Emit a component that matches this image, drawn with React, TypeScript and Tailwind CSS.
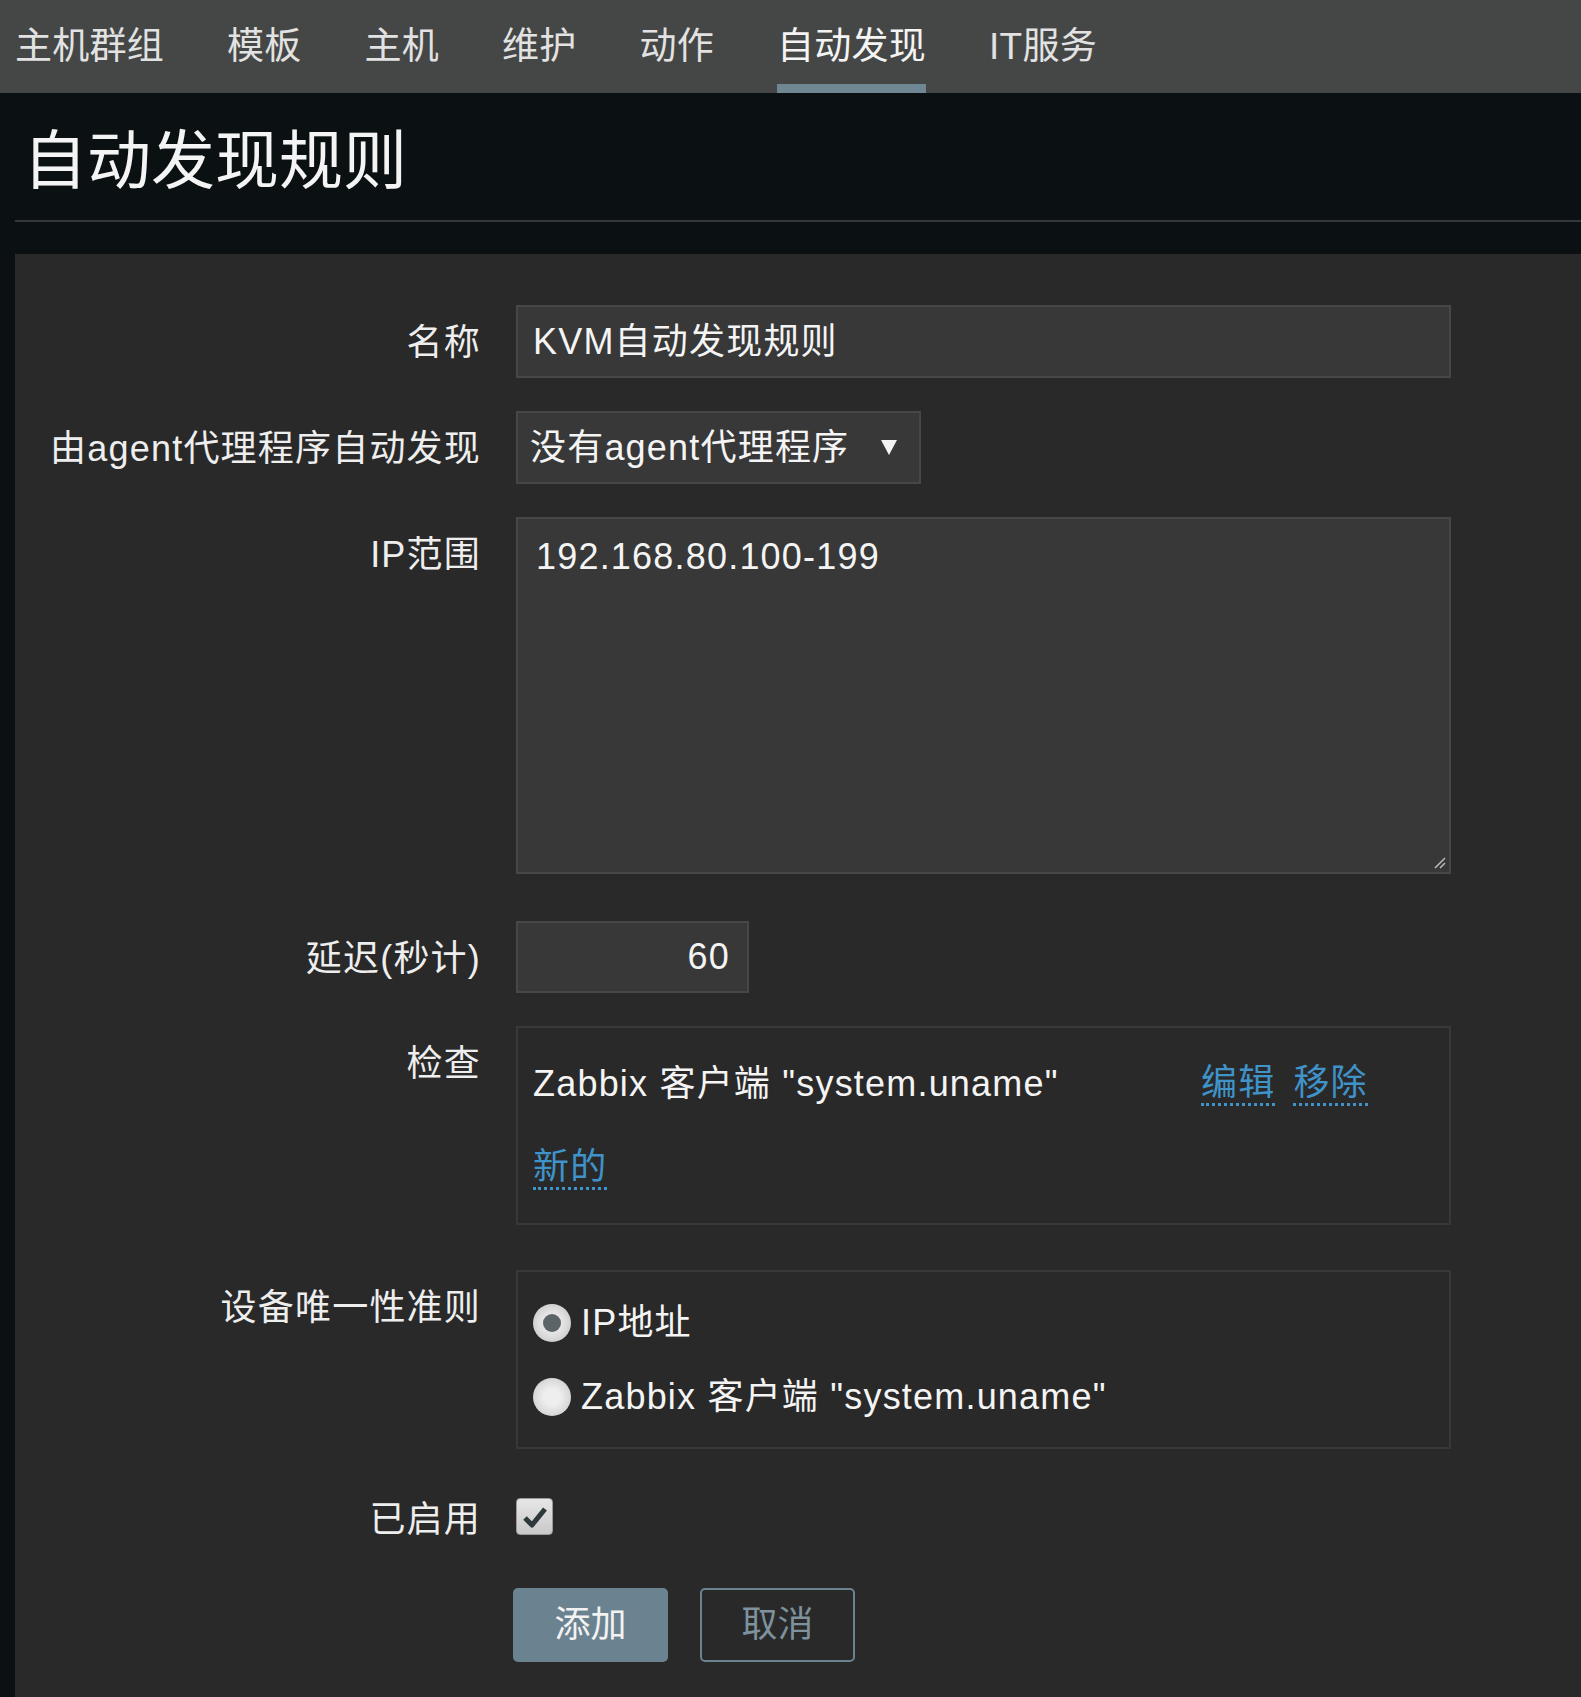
import { ReactNode } from "react";

const navItems = ["主机群组", "模板", "主机", "维护", "动作", "自动发现", "IT服务"];

const FormRow = ({ label, children, className, labelClass }: { label: string; children: ReactNode; className: string; labelClass?: string }) => (
    <div className={`flex items-start ${className}`}>
        <div className={`w-[466px] shrink-0 text-right text-[36px] leading-[44px] text-[#eeeeee] ${labelClass ?? "pt-[16px]"}`}>{label}</div>
        <div className="ml-[35px]">{children}</div>
    </div>
);

const Link = ({ children }: { children: ReactNode }) => (
    <span className="cursor-pointer border-b-[3px] border-dotted border-[#3f93c9] text-[36px] leading-[40px] text-[#3f93c9]">{children}</span>
);

const App = () => {
    return (
        <div className="flex min-h-[1697px] flex-col bg-[#0b1112] font-['Liberation_Sans','Noto_Sans_CJK_SC',sans-serif]">
            {/* top nav */}
            <div className="flex h-[93px] gap-[63px] bg-[#454746] pl-[15px]">
                {navItems.map((item) => (
                    <div
                        key={item}
                        className={`flex h-full items-center border-b-[9px] pt-[9px] text-[37px] tracking-[0.25px] ${
                            item === "自动发现" ? "border-[#6f8793] text-[#f4f4f4]" : "border-transparent text-[#e2e2e2]"
                        }`}
                    >
                        {item}
                    </div>
                ))}
            </div>

            {/* header */}
            <h1 className="ml-[23px] mt-[30px] mb-[21px] text-[64px] font-normal leading-[76px] text-[#f4f4f4]">自动发现规则</h1>
            <div className="ml-[15px] h-[2px] bg-[#34383a]" />

            {/* form panel */}
            <div className="ml-[15px] mt-[32px] flex-1 bg-[#292929] pt-[51px] tracking-[1.2px]">
                <FormRow label="名称" className="mb-[33px]">
                    <div className="flex h-[73px] w-[935px] items-center border-2 border-[#474747] bg-[#383838] pl-[15px] text-[36px] text-[#f4f4f4]">
                        KVM自动发现规则
                    </div>
                </FormRow>

                <FormRow label="由agent代理程序自动发现" className="mb-[33px]">
                    <div className="flex h-[73px] w-[405px] items-center justify-between border-2 border-[#474747] bg-[#383838] pl-[12px] pr-[22px] text-[36px] text-[#f4f4f4]">
                        <span>没有agent代理程序</span>
                        <svg width="16" height="15" viewBox="0 0 16 15">
                            <path d="M0 0 H16 L8 15 Z" fill="#f4f4f4" />
                        </svg>
                    </div>
                </FormRow>

                <FormRow label="IP范围" className="mb-[47px]">
                    <div className="relative h-[357px] w-[935px] border-2 border-[#474747] bg-[#383838] pl-[18px] pt-[16px] text-[36px] leading-[44px] text-[#f4f4f4]">
                        192.168.80.100-199
                        <svg className="absolute bottom-[3px] right-[3px]" width="16" height="16" viewBox="0 0 16 16">
                            <path d="M15 5 L5 15 M15 10 L10 15" stroke="#bbbbbb" strokeWidth="1.5" />
                        </svg>
                    </div>
                </FormRow>

                <FormRow label="延迟(秒计)" className="mb-[33px]">
                    <div className="flex h-[72px] w-[233px] items-center justify-end border-2 border-[#474747] bg-[#383838] pr-[17px] text-[36px] text-[#f4f4f4]">
                        60
                    </div>
                </FormRow>

                <FormRow label="检查" className="mb-[45px]">
                    <div className="h-[199px] w-[935px] border-2 border-[#383838] bg-[#292929] pl-[15px] pt-[34px] text-[36px] text-[#f4f4f4]">
                        <div className="flex h-[44px] items-center">
                            <span className="w-[668px] shrink-0 leading-[44px]">Zabbix 客户端 "system.uname"</span>
                            <div className="flex gap-[18px]">
                                <Link>编辑</Link>
                                <Link>移除</Link>
                            </div>
                        </div>
                        <div className="mt-[40px] flex h-[44px] items-center">
                            <Link>新的</Link>
                        </div>
                    </div>
                </FormRow>

                <FormRow label="设备唯一性准则" className="mb-[49px]">
                    <div className="h-[179px] w-[935px] border-2 border-[#383838] bg-[#292929] pl-[15px] pt-[30px] text-[36px] text-[#f4f4f4]">
                        <div className="flex h-[42px] items-center gap-[10px]">
                            <span className="flex h-[38px] w-[38px] items-center justify-center rounded-full bg-[radial-gradient(circle,#e4e4e4_40%,#bdbdbd_100%)]">
                                <span className="h-[18px] w-[18px] rounded-full bg-[#5b6568]" />
                            </span>
                            <span>IP地址</span>
                        </div>
                        <div className="mt-[32px] flex h-[42px] items-center gap-[10px]">
                            <span className="h-[38px] w-[38px] rounded-full bg-[radial-gradient(circle,#eeeeee_30%,#c4c4c4_100%)]" />
                            <span>Zabbix 客户端 "system.uname"</span>
                        </div>
                    </div>
                </FormRow>

                <FormRow label="已启用" className="mb-[46px]" labelClass="pt-0">
                    <div className="flex h-[37px] w-[37px] items-center justify-center rounded-[4px] border border-[#9a9a9a] bg-[linear-gradient(#e6e6e6,#c9c9c9)]">
                        <svg width="26" height="24" viewBox="0 0 26 24">
                            <path d="M3 13 L10 20 L23 4" stroke="#2c383c" strokeWidth="5" fill="none" strokeLinejoin="round" />
                        </svg>
                    </div>
                </FormRow>

                <div className="ml-[498px] flex gap-[32px] pb-[36px]">
                    <button className="h-[74px] w-[155px] rounded-[5px] bg-[#6b8390] text-[36px] tracking-normal text-[#f2f2f2]">添加</button>
                    <button className="h-[74px] w-[155px] rounded-[5px] border-2 border-[#6b8390] text-[36px] tracking-normal text-[#7d929c]">取消</button>
                </div>
            </div>
        </div>
    );
};

export default App;
